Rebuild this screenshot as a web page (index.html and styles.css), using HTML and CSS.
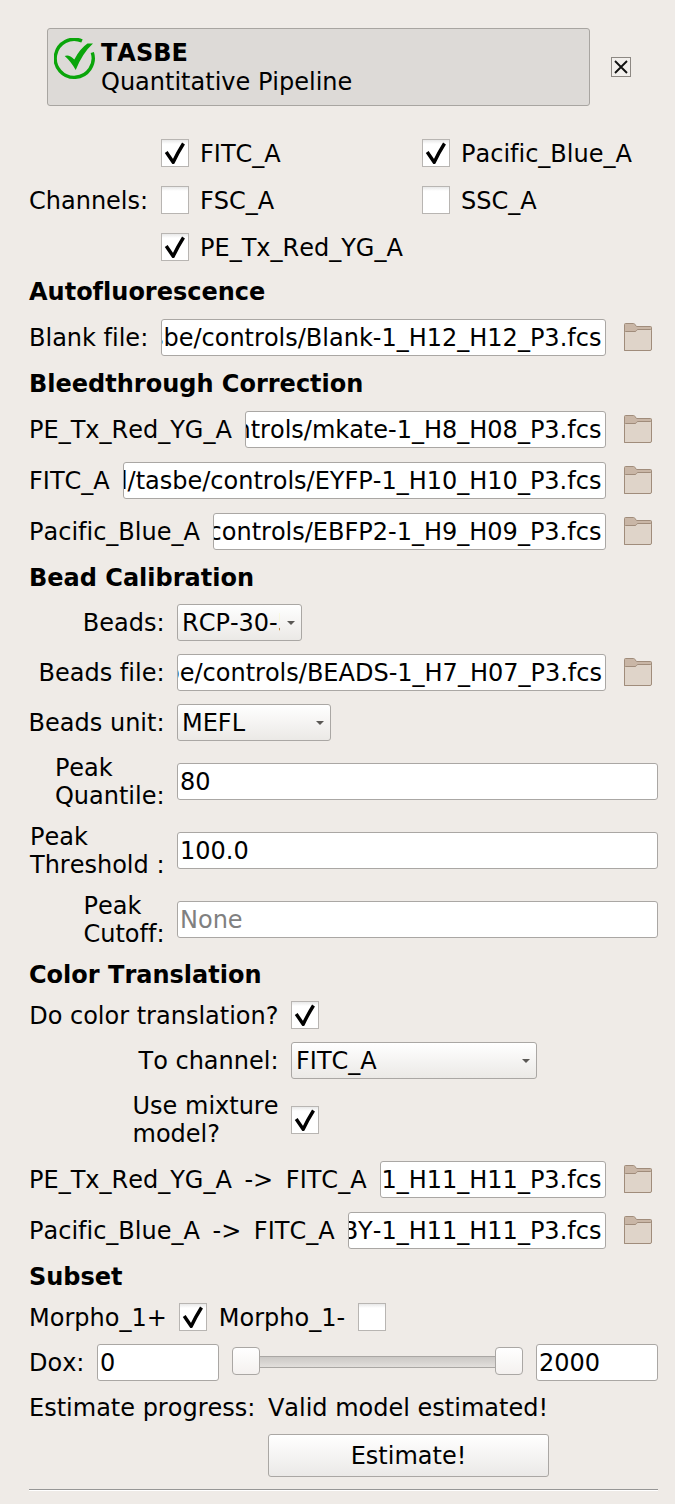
FILE: index.html
```html
<!DOCTYPE html>
<html lang="en">
<head>
<meta charset="utf-8">
<title>TASBE Quantitative Pipeline</title>
<link rel="stylesheet" href="styles.css">
</head>
<body>
<svg class="defs" width="0" height="0">
  <symbol id="folder" viewBox="0 0 28 28">
    <path d="M.5 27.500V1.500Q.5.5 1.500.5H9.500Q10.500.5 11 1.500L12.500 3.500H26.500Q27.500 3.500 27.500 4.500V10H.5Z" fill="#c9b6a6" stroke="#a08c7b"/>
    <path d="M.5 27.500V9.500Q.5 8.500 1.500 8.500H11Q12 8.500 12.500 7.500Q13 6.500 14 6.500H26.500Q27.500 6.500 27.500 7.500V26Q27.500 27.500 26 27.500Z" fill="#dfd4c9" stroke="#a08c7b"/>
  </symbol>
  <symbol id="check" viewBox="0 0 26 26">
    <path d="M4.200 12L11.200 22.300Q15.500 13 21.500 3.500" fill="none" stroke="#000" stroke-width="3.400" stroke-linejoin="round"/>
  </symbol>
</svg>
<main class="panel">
  <header class="top">
    <button class="title">
      <svg class="ok" viewBox="0 0 42 42">
        <path d="M28 3A19 19 0 1 0 38.300 14.500" fill="none" stroke="#0aa50a" stroke-width="3.400"/>
        <path d="M10.700 18Q15 16 20.300 21.500Q26 10.500 33.500 5.500H39Q28.500 15 21.700 32Q17 23.500 10.700 18Z" fill="#0aa50a"/>
      </svg>
      <span class="caption"><b>TASBE</b><br>Quantitative Pipeline</span>
    </button>
    <button class="close"><svg viewBox="0 0 18 18"><path d="M3 3L15 15M15 3L3 15" stroke="#111" stroke-width="1.900"/></svg></button>
  </header>

  <section class="channels">
    <span class="name">Channels:</span>
    <div class="boxes">
      <label><i class="cb"><svg><use href="#check"/></svg></i><span>FITC_A</span></label>
      <label><i class="cb"><svg><use href="#check"/></svg></i><span>Pacific_Blue_A</span></label>
      <label><i class="cb"></i><span>FSC_A</span></label>
      <label><i class="cb"></i><span>SSC_A</span></label>
      <label><i class="cb"><svg><use href="#check"/></svg></i><span>PE_Tx_Red_YG_A</span></label>
    </div>
  </section>

  <h2 class="first">Autofluorescence</h2>
  <div class="file w-blank"><span>Blank file:</span><div class="field end"><span>sbe/controls/Blank-1_H12_H12_P3.fcs</span></div><svg class="folder"><use href="#folder"/></svg></div>

  <h2>Bleedthrough Correction</h2>
  <div class="file w-pe"><span>PE_Tx_Red_YG_A</span><div class="field end"><span>ntrols/mkate-1_H8_H08_P3.fcs</span></div><svg class="folder"><use href="#folder"/></svg></div>
  <div class="file w-fitc"><span>FITC_A</span><div class="field end"><span>l/tasbe/controls/EYFP-1_H10_H10_P3.fcs</span></div><svg class="folder"><use href="#folder"/></svg></div>
  <div class="file w-blue"><span>Pacific_Blue_A</span><div class="field end"><span>controls/EBFP2-1_H9_H09_P3.fcs</span></div><svg class="folder"><use href="#folder"/></svg></div>

  <h2 class="low">Bead Calibration</h2>
  <div class="form"><span>Beads:</span><div class="combo beads"><span>RCP-30-5</span></div></div>
  <div class="file w-beads"><span>Beads file:</span><div class="field end"><span>be/controls/BEADS-1_H7_H07_P3.fcs</span></div><svg class="folder"><use href="#folder"/></svg></div>
  <div class="form"><span>Beads unit:</span><div class="combo unit"><span>MEFL</span></div></div>
  <div class="form tall"><span>Peak<br>Quantile:</span><div class="field"><span>80</span></div></div>
  <div class="form tall"><span>Peak<br>Threshold :</span><div class="field"><span>100.0</span></div></div>
  <div class="form tall"><span>Peak<br>Cutoff:</span><div class="field hint"><span>None</span></div></div>

  <h2 class="low">Color Translation</h2>
  <div class="form color"><span class="low">Do color translation?</span><i class="cb"><svg><use href="#check"/></svg></i></div>
  <div class="form color"><span>To channel:</span><div class="combo to"><span>FITC_A</span></div></div>
  <div class="form color mixture"><span>Use mixture<br>model?</span><i class="cb"><svg><use href="#check"/></svg></i></div>
  <div class="file w-pefitc"><span class="pair"><span>PE_Tx_Red_YG_A</span><span>-&gt;</span><span>FITC_A</span></span><div class="field end"><span>1_H11_H11_P3.fcs</span></div><svg class="folder"><use href="#folder"/></svg></div>
  <div class="file w-bluefitc"><span class="pair"><span>Pacific_Blue_A</span><span>-&gt;</span><span>FITC_A</span></span><div class="field end"><span>BY-1_H11_H11_P3.fcs</span></div><svg class="folder"><use href="#folder"/></svg></div>

  <h2 class="low">Subset</h2>
  <div class="morpho"><span class="low">Morpho_1+</span><i class="cb"><svg><use href="#check"/></svg></i><span class="low">Morpho_1-</span><i class="cb last"></i></div>
  <div class="dox"><span>Dox:</span><div class="field"><span>0</span></div><div class="slider"><i class="handle"></i><i class="groove"></i><i class="handle"></i></div><div class="field"><span>2000</span></div></div>
  <div class="progress"><span>Estimate progress:</span><span>Valid model estimated!</span></div>
  <button class="estimate">Estimate!</button>
  <hr>
</main>
</body>
</html>
```
FILE: styles.css
```css
* { box-sizing: border-box; }
body {
  margin: 0;
  height: 1504px;
  overflow: hidden;
  background: #efebe7;
  color: #000;
  font: 24px/28px "DejaVu Sans", sans-serif;
  font-kerning: none;
  font-variant-ligatures: none;
}
button {
  font: inherit;
  font-kerning: none;
  font-variant-ligatures: none;
  color: inherit;
  padding: 0;
  margin: 0;
}
.defs { position: absolute; }
.panel {
  display: grid;
  grid-template-columns: 629px;
  grid-template-rows: 98px 122px 32px 37px 29px 38px 38px 37px 28px 37px 37px 37px 56px 56px 55px 28px 28px 37px 56px 38px 37px 28px 28px 37px 27px 43px 2px;
  row-gap: 13px;
  padding: 28px 17px 0 29px;
  white-space: nowrap;
}
h2 { margin: 0; font-size: 24px; line-height: 28px; align-self: center; }
h2.first { padding-top: 4px; }
h2.low { height: 28px; padding-top: 1px; }
span.low { height: 28px; padding-top: 1px; }

.top { display: flex; align-items: flex-start; padding-left: 18px; }
.title {
  display: flex;
  align-items: flex-start;
  width: 543px;
  height: 78px;
  padding: 9px 6px;
  background: #dddad7;
  border: 1px solid #a8a5a1;
  border-radius: 3px;
  text-align: left;
  line-height: 29px;
}
.caption { padding-top: 1px; }
.ok { width: 42px; height: 42px; margin-right: 5px; }
.close {
  width: 20px;
  height: 20px;
  margin: 29px 0 0 21px;
  background: #f2efec;
  border: 1px solid #8d8883;
}
.close svg { display: block; width: 18px; height: 18px; }

.channels { display: flex; align-items: center; }
.channels .name { width: 132px; padding-top: 2px; }
.boxes { display: grid; grid-template-columns: 261px auto; row-gap: 19px; }
.boxes label { display: flex; align-items: center; gap: 11px; height: 28px; }
.boxes label span { height: 28px; padding-top: 1px; }
.cb {
  display: block;
  width: 28px;
  height: 28px;
  border: 1px solid #b8b5b2;
  background: linear-gradient(#e8e8e8, #fff 4px);
}
.cb svg { display: block; width: 26px; height: 26px; }

.field, .combo {
  display: flex;
  align-items: center;
  height: 37px;
  border: 1px solid #aaa7a4;
  border-radius: 3px;
  overflow: hidden;
}
.field { background: #fff; padding: 0 3px 0 2px; }
.end { justify-content: flex-end; padding-right: 3.6px; }
.hint { color: #808080; }

.file {
  display: grid;
  height: 37px;
  align-items: center;
}
.folder { width: 28px; height: 28px; margin: 0 0 1px 18px; }
.w-blank { grid-template-columns: 132px 445px 52px; }
.w-pe { grid-template-columns: 216px 361px 52px; }
.w-fitc { grid-template-columns: 94px 483px 52px; }
.w-blue { grid-template-columns: 184px 393px 52px; }
.w-beads { grid-template-columns: 148px 429px 52px; }
.w-beads > span { justify-self: end; padding-right: 12.5px; }
.w-beads .end { padding-right: 3px; }
.w-pefitc { grid-template-columns: 351px 226px 52px; }
.w-bluefitc { grid-template-columns: 319px 258px 52px; }
.pair { display: flex; gap: 12.6px; }

.form { display: grid; grid-template-columns: 136px 481px; column-gap: 12px; align-items: center; }
.form > span { justify-self: end; padding-right: 0.5px; }
.tall .field { margin-bottom: 1px; }
.color { grid-template-columns: 250px 367px; }
.combo {
  position: relative;
  padding: 0 21px 0 4px;
  background: linear-gradient(#fff, #ebe9e6);
}
.combo span { flex: 1; overflow: hidden; }
.combo::after {
  content: "";
  position: absolute;
  right: 6px;
  top: 16px;
  border: 4px solid transparent;
  border-top: 4px solid #5a5855;
  border-bottom: 0;
}
.beads { width: 125px; }
.unit { width: 154px; }
.to { width: 246px; }
.mixture > .cb { margin-bottom: 2px; }
.mixture > span { margin-bottom: 1px; }

.morpho { display: flex; align-items: center; gap: 12px; }
.morpho .last { margin-left: 1px; }
.dox { display: grid; grid-template-columns: 68px 122px 317px 122px; align-items: center; }
.slider { display: flex; align-items: center; padding: 0 13px; height: 28px; margin-bottom: 3px; }
.handle {
  width: 28px;
  height: 28px;
  border: 1px solid #aaa7a4;
  border-radius: 4px;
  background: linear-gradient(#fff, #f4f1ef);
}
.groove {
  flex: 1;
  height: 12px;
  margin-top: 2px;
  border: solid #aaa7a4;
  border-width: 1px 0;
  background: linear-gradient(#cbc8c5, #e2dfdc);
}
.progress { display: flex; gap: 12.5px; align-items: center; }
.estimate {
  width: 281px;
  margin-left: 239px;
  border: 1px solid #aaa7a4;
  border-radius: 3px;
  background: linear-gradient(#fff, #ebe9e7);
}
hr {
  width: 629px;
  height: 2px;
  margin: -1px 0 0;
  border: 0;
  border-top: 1px solid #969696;
  background: #fff;
}
```
